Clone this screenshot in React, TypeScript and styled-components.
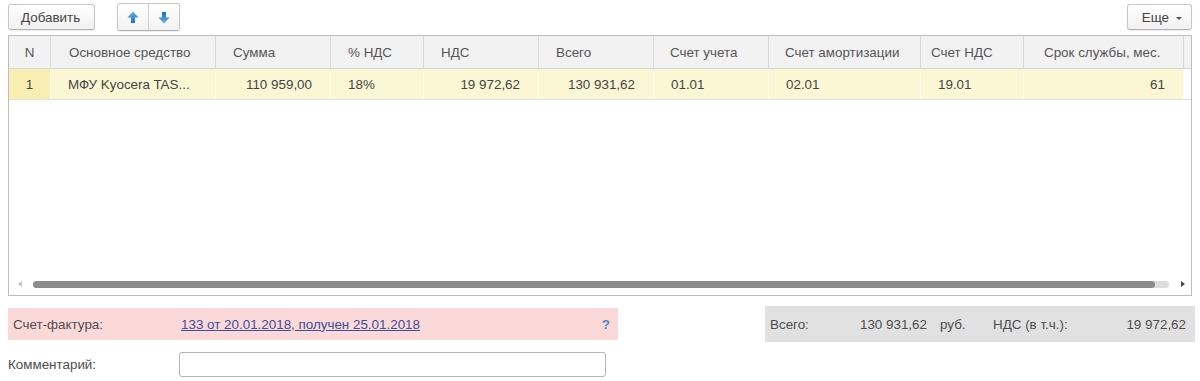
import React from "react";
import styled, {createGlobalStyle} from "styled-components";

const GlobalStyle = createGlobalStyle`
    html, body {
        margin: 0;
        padding: 0;
        background: #ffffff;
    }
    body {
        font-family: "Liberation Sans", Arial, sans-serif;
        font-size: 13.4px;
        color: #4d4d4d;
    }
`;

interface Column {
    title: string;
    width: number;
    headPad: number;
    align: "left" | "right" | "center";
    value: string;
}

const columns: Column[] = [
    {title: "N", width: 42, headPad: 0, align: "center", value: "1"},
    {title: "Основное средство", width: 165, headPad: 18, align: "left", value: "МФУ Kyocera TAS..."},
    {title: "Сумма", width: 115, headPad: 17, align: "right", value: "110 959,00"},
    {title: "% НДС", width: 93, headPad: 17, align: "left", value: "18%"},
    {title: "НДС", width: 115, headPad: 17, align: "right", value: "19 972,62"},
    {title: "Всего", width: 115, headPad: 17, align: "right", value: "130 931,62"},
    {title: "Счет учета", width: 115, headPad: 16, align: "left", value: "01.01"},
    {title: "Счет амортизации", width: 152, headPad: 16, align: "left", value: "02.01"},
    {title: "Счет НДС", width: 103, headPad: 10, align: "left", value: "19.01"},
    {title: "Срок службы, мес.", width: 160, headPad: 20, align: "right", value: "61"},
];

const Page = styled.div`
    width: 1184px;
    padding: 4px 8px 0 8px;
    display: flex;
    flex-direction: column;
`;

const Toolbar = styled.div`
    display: flex;
    align-items: center;
    height: 26px;
`;

const Button = styled.button`
    height: 26px;
    padding: 0 12px;
    display: flex;
    align-items: center;
    gap: 7px;
    font-family: "Liberation Sans", Arial, sans-serif;
    font-size: 13.4px;
    color: #444;
    background: linear-gradient(#ffffff, #f1f1f1);
    border: 1px solid #c6c6c6;
    border-bottom-color: #b2b2b2;
    border-radius: 3px;
    box-shadow: 0 1px 1px rgba(0, 0, 0, 0.08);
`;

const AddButton = styled(Button)`
    width: 87px;
`;

const MoreButton = styled(Button)`
    margin-left: auto;
    padding: 0 9px 0 14px;
`;

const Caret = styled.span`
    width: 0;
    height: 0;
    border-left: 3px solid transparent;
    border-right: 3px solid transparent;
    border-top: 3px solid #555;
    margin-top: 2px;
`;

const ButtonGroup = styled.div`
    display: flex;
    margin-left: 22px;
    height: 26px;
    border: 1px solid #c6c6c6;
    border-bottom-color: #b2b2b2;
    border-radius: 3px;
    box-shadow: 0 1px 1px rgba(0, 0, 0, 0.08);
    overflow: hidden;
`;

const IconButton = styled.div<{$first?: boolean}>`
    width: 30px;
    height: 100%;
    display: flex;
    align-items: center;
    justify-content: center;
    background: linear-gradient(#ffffff, #f1f1f1);
    border-right: ${p => p.$first ? "1px solid #d0d0d0" : "none"};
`;

const Table = styled.div`
    margin-top: 5px;
    height: 259px;
    border: 1px solid #bdbdbd;
    display: flex;
    flex-direction: column;
`;

const HeaderRow = styled.div`
    display: flex;
    height: 32px;
    background: #f2f2f2;
    border-bottom: 1px solid #d6d6d6;
`;

const HeadCell = styled.div<{$w: number; $pad: number; $center: boolean}>`
    width: ${p => p.$w}px;
    flex: none;
    box-sizing: border-box;
    padding-left: ${p => p.$pad}px;
    display: flex;
    align-items: center;
    justify-content: ${p => p.$center ? "center" : "flex-start"};
    border-right: 1px solid #d9d9d9;
    color: #555;
    white-space: nowrap;
`;

const DataRow = styled.div`
    display: flex;
    height: 30px;
    border-bottom: 1px solid #e2e2e2;
`;

const DataCell = styled.div<{$w: number; $align: string; $current?: boolean}>`
    width: ${p => p.$w}px;
    flex: none;
    box-sizing: border-box;
    padding-left: ${p => p.$align === "center" ? 0 : 17}px;
    padding-right: ${p => p.$align === "center" ? 0 : 18}px;
    display: flex;
    align-items: center;
    justify-content: ${p => p.$align === "right" ? "flex-end" : p.$align === "center" ? "center" : "flex-start"};
    background: ${p => p.$current ? "#f8eeb2" : "#fbf7d5"};
    border-right: 1px solid #fdfbea;
    color: #444;
    white-space: nowrap;
`;

const Filler = styled.div`
    flex: 1;
`;

const ScrollBar = styled.div`
    height: 14px;
    display: flex;
    align-items: center;
    padding: 0 6px 4px 9px;
    gap: 6px;
`;

const ScrollArrow = styled.span<{$dir: "left" | "right"; $color: string}>`
    width: 0;
    height: 0;
    border-top: 3px solid transparent;
    border-bottom: 3px solid transparent;
    ${p => p.$dir === "left" ? `border-right: 4px solid ${p.$color};` : `border-left: 4px solid ${p.$color};`}
`;

const Track = styled.div`
    flex: 1;
    height: 7px;
    margin: 0 6px 0 5px;
    border-radius: 4px;
    background: #dcdcdc;
    display: flex;
`;

const Thumb = styled.div`
    height: 100%;
    border-radius: 4px;
    background: #8c8c8c;
`;

const Footer = styled.div`
    margin-top: 10px;
    height: 36px;
    display: flex;
    align-items: center;
`;

const InvoiceField = styled.div`
    width: 610px;
    height: 32px;
    background: #fbd9d9;
    display: flex;
    align-items: center;
    padding: 0 8px 0 5px;
    box-sizing: border-box;
`;

const Label = styled.span<{$w: number}>`
    width: ${p => p.$w}px;
    flex: none;
    color: #4d4d4d;
`;

const Link = styled.a`
    color: #3c4f9b;
    text-decoration: underline;
    cursor: pointer;
`;

const Help = styled.span`
    margin-left: auto;
    color: #4c86c6;
    font-weight: bold;
`;

const Totals = styled.div`
    margin-left: auto;
    margin-right: -3px;
    width: 430px;
    height: 36px;
    background: #e1e1e1;
    display: flex;
    align-items: center;
    box-sizing: border-box;
    padding: 0 9px 0 5px;
`;

const Amount = styled.span<{$w: number}>`
    width: ${p => p.$w}px;
    flex: none;
    text-align: right;
`;

const Unit = styled.span`
    margin-left: 13px;
    width: 53px;
    flex: none;
`;

const CommentRow = styled.div`
    margin-top: 8px;
    height: 28px;
    display: flex;
    align-items: center;
`;

const Input = styled.input`
    width: 427px;
    height: 25px;
    box-sizing: border-box;
    border: 1px solid #b5b5b5;
    border-radius: 3px;
    background: #fff;
    outline: none;
`;

const Arrow = ({up}: {up: boolean}) => (
    <svg width="12" height="13" viewBox="0 0 12 13">
        <defs>
            <linearGradient id={up ? "gu" : "gd"} x1="0" y1="0" x2="0" y2="1">
                <stop offset="0" stopColor="#63b0ec" />
                <stop offset="1" stopColor="#1f6fc0" />
            </linearGradient>
        </defs>
        <path
            d="M6 0.5 L11.5 6.5 H8 V12 H4 V6.5 H0.5 Z"
            fill={`url(#${up ? "gu" : "gd"})`}
            transform={up ? undefined : "rotate(180 6 6.5)"}
        />
    </svg>
);

export default function App() {
    return (
        <>
            <GlobalStyle />
            <Page>
                <Toolbar>
                    <AddButton>Добавить</AddButton>
                    <ButtonGroup>
                        <IconButton $first><Arrow up /></IconButton>
                        <IconButton><Arrow up={false} /></IconButton>
                    </ButtonGroup>
                    <MoreButton>Еще <Caret /></MoreButton>
                </Toolbar>
                <Table>
                    <HeaderRow>
                        {columns.map(c => (
                            <HeadCell key={c.title} $w={c.width} $pad={c.headPad} $center={c.align === "center"}>
                                {c.title}
                            </HeadCell>
                        ))}
                    </HeaderRow>
                    <DataRow>
                        {columns.map((c, i) => (
                            <DataCell key={c.title} $w={c.width} $align={c.align} $current={i === 0}>
                                {c.value}
                            </DataCell>
                        ))}
                    </DataRow>
                    <Filler />
                    <ScrollBar>
                        <ScrollArrow $dir="left" $color="#c4c4c4" />
                        <Track>
                            <Thumb style={{width: "98.8%"}} />
                        </Track>
                        <ScrollArrow $dir="right" $color="#444" />
                    </ScrollBar>
                </Table>
                <Footer>
                    <InvoiceField>
                        <Label $w={168}>Счет-фактура:</Label>
                        <Link>133 от 20.01.2018, получен 25.01.2018</Link>
                        <Help>?</Help>
                    </InvoiceField>
                    <Totals>
                        <Label $w={52}>Всего:</Label>
                        <Amount $w={105}>130 931,62</Amount>
                        <Unit>руб.</Unit>
                        <Label $w={90}>НДС (в т.ч.):</Label>
                        <Amount $w={103}>19 972,62</Amount>
                    </Totals>
                </Footer>
                <CommentRow>
                    <Label $w={171}>Комментарий:</Label>
                    <Input />
                </CommentRow>
            </Page>
        </>
    );
}
